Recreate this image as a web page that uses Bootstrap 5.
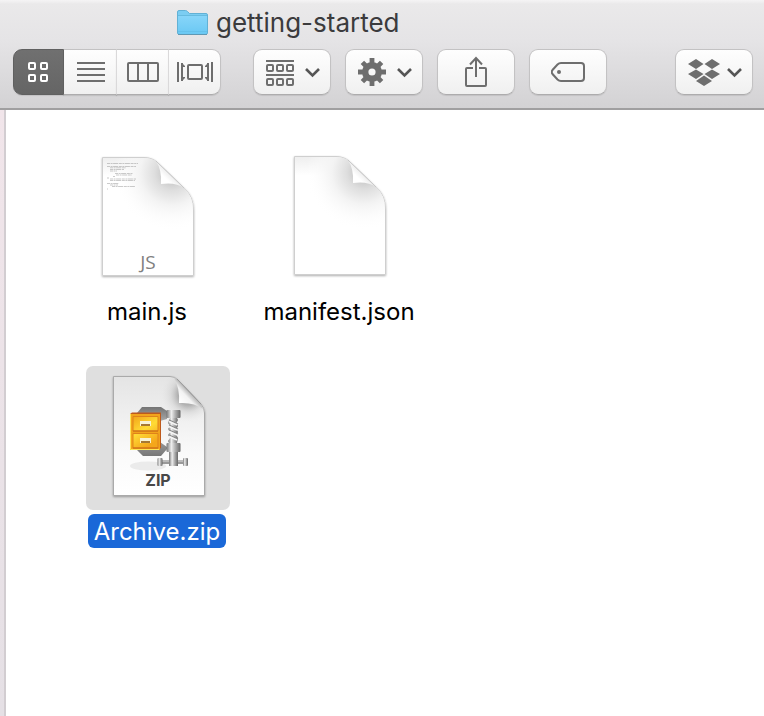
<!DOCTYPE html>
<html lang="en">
<head>
<meta charset="utf-8">
<meta name="viewport" content="width=device-width, initial-scale=1">
<title>getting-started</title>
<link href="https://cdn.jsdelivr.net/npm/bootstrap@5.3.0/dist/css/bootstrap.min.css" rel="stylesheet">
<style>
  body { font-family: Inter, "Liberation Sans", sans-serif; background: #fff; color: #000; }
  svg { display: block; }
  .window-bar { background: linear-gradient(#f5f4f5 0, #eae9ea 4px, #e5e4e6 40px, #d3d2d4 100%); border-bottom: 2px solid #a09fa0; padding: 6px 11px 13px 13px; }
  .window-title { font-size: 26px; line-height: 34px; color: #3b3b3d; }
  .title-row { padding-left: 164px; gap: 8px; margin-bottom: 9px; }
  .tool-row { gap: 14px; }
  .tool { --bs-btn-border-color: #c3c2c3; --bs-btn-hover-border-color: #c3c2c3; --bs-btn-padding-x: 0; --bs-btn-padding-y: 0;
    height: 46px; background: linear-gradient(#fefefe, #f0f0f0); color: #6e6e6e; border-bottom-color: #adacad; box-shadow: 0 1px 1px #00000018;
    display: flex; align-items: center; justify-content: center; }
  .tool-single { width: 78px; border-radius: 9px; }
  .tool-menu { padding-left: 2px; }
  .views { width: 208px; margin-right: 18px; }
  .views .tool { flex: 1 1 0; border-left-color: #dad9da; }
  .views .tool:first-child { border-top-left-radius: 9px; border-bottom-left-radius: 9px; }
  .views .tool:last-child { border-top-right-radius: 9px; border-bottom-right-radius: 9px; }
  .views .tool.active { background: linear-gradient(#707070, #656565); border-color: #606060; color: #fff; }
  .edge { width: 6px; background: linear-gradient(#f1e5ea, #e5e0e5); border-right: 2px solid #d2cdd1; }
  .files { padding: 36px 0 36px 46px; }
  .file-row { gap: 48px; padding-left: 24px; margin-bottom: 38px; }
  .file-row-offset { padding-left: 34px; }
  .file { width: 144px; color: #000; }
  .thumb { border-radius: 7px; }
  .file-name { font-size: 24px; line-height: 32px; padding: 2px 6px 0; margin: 4px 2px 0 0; border-radius: 6px; white-space: nowrap; }
  .selected .thumb { background: #dfdfdf; }
  .selected .file-name { background: #1a68d8; color: #fff; }
</style>
<script src="https://cdn.jsdelivr.net/npm/bootstrap@5.3.0/dist/js/bootstrap.bundle.min.js"></script>
</head>
<body class="d-flex flex-column min-vh-100">
<header class="window-bar">
  <div class="title-row d-flex align-items-center">
    <svg width="31" height="28" viewBox="0 0 31 28" aria-hidden="true">
      <defs><linearGradient id="folder" x2="0" y2="1"><stop stop-color="#87d5f9"/><stop offset="1" stop-color="#6ac8f3"/></linearGradient></defs>
      <path d="M.5 3Q.5 1.500 2 1.500H8.500Q9.500 1.500 10.500 2.500L12.500 4.500H29Q30.500 4.500 30.500 6V24.500H.5Z" fill="#7bcdf2" stroke="#62b1d5"/>
      <path d="M1 7H30V23.500Q30 25 28.500 25H2.500Q1 25 1 23.500Z" fill="url(#folder)"/>
      <path d="M1 6.500H30" stroke="#67bbdf"/><path d="M1 22.500H30" stroke="#62bee8" opacity=".7"/><path d="M1 25.500H30" stroke="#6098b3"/>
    </svg>
    <h1 class="window-title fw-normal mb-0">getting-started</h1>
  </div>
  <div class="tool-row d-flex align-items-center" role="toolbar" aria-label="Window tools">
    <div class="btn-group views" role="group" aria-label="View">
      <button type="button" class="btn tool active" aria-label="Icons" aria-pressed="true">
        <svg width="22" height="22" fill="none" stroke="currentColor" stroke-width="2"><rect x="1" y="2" width="6" height="6" rx="1"/><rect x="13" y="2" width="6" height="6" rx="1"/><rect x="1" y="14" width="6" height="6" rx="1"/><rect x="13" y="14" width="6" height="6" rx="1"/></svg>
      </button>
      <button type="button" class="btn tool tool-menu" aria-label="List">
        <svg width="28" height="20" stroke="currentColor" stroke-width="2"><path d="M0 1H28M0 7H28M0 13H28M0 19H28"/></svg>
      </button>
      <button type="button" class="btn tool tool-menu" aria-label="Columns">
        <svg width="32" height="20" fill="none" stroke="currentColor" stroke-width="2"><rect x="1" y="1" width="30" height="18" rx="1"/><path d="M11 1V19M21 1V19"/></svg>
      </button>
      <button type="button" class="btn tool tool-menu" aria-label="Cover flow">
        <svg width="36" height="20" fill="none" stroke="currentColor" stroke-width="2"><rect x="11" y="3" width="14" height="14" rx="1"/><path d="M1 0V20M35 0V20M5 1V19M31 1V19"/><path d="M5 1L8 4V5H5ZM5 19L8 16V15H5ZM31 1L28 4V5H31ZM31 19L28 16V15H31Z" fill="currentColor" stroke="none"/></svg>
      </button>
    </div>
    <button type="button" class="btn tool tool-single tool-menu" aria-label="Arrange items">
      <svg width="54" height="28" fill="none" stroke="currentColor" stroke-width="2"><path d="M0 3H28M0 17H28"/><rect x="1" y="7" width="6" height="6" rx="1"/><rect x="11" y="7" width="6" height="6" rx="1"/><rect x="21" y="7" width="6" height="6" rx="1"/><rect x="1" y="21" width="6" height="6" rx="1"/><rect x="11" y="21" width="6" height="6" rx="1"/><rect x="21" y="21" width="6" height="6" rx="1"/><path d="M40 11L46.500 17.500L53 11" stroke="#555" stroke-width="2.600"/></svg>
    </button>
    <button type="button" class="btn tool tool-single tool-menu" aria-label="Actions">
      <svg width="54" height="28"><g fill="none" stroke="currentColor" transform="translate(14 14)"><circle r="6.800" stroke-width="6.400"/><g stroke-width="4.800"><path d="M0-14V-8M0 14V8M-14 0H-8M14 0H8"/><path d="M-9.600-9.600L-6-6M9.600-9.600L6-6M-9.600 9.600L-6 6M9.600 9.600L6 6"/></g></g><path d="M40 11L46.500 17.500L53 11" fill="none" stroke="#555" stroke-width="2.600"/></svg>
    </button>
    <button type="button" class="btn tool tool-single" aria-label="Share">
      <svg width="22" height="32" viewBox="0 0 22 32" fill="none" stroke="currentColor" stroke-width="2"><path d="M8 12H2Q1 12 1 13V29Q1 30 2 30H20Q21 30 21 29V13Q21 12 20 12H14M11 21V2M5 8.500L11 2L17 8.500"/></svg>
    </button>
    <button type="button" class="btn tool tool-single" aria-label="Edit tags">
      <svg width="34" height="20" fill="none" stroke="currentColor" stroke-width="2"><path d="M10 1H30Q33 1 33 4V16Q33 19 30 19H10Q8 19 6.500 17.500L1.500 12Q0 10 1.500 8L6.500 2.500Q8 1 10 1Z"/><circle cx="8" cy="10" r="2" fill="currentColor" stroke="none"/></svg>
    </button>
    <button type="button" class="btn tool tool-single tool-menu ms-auto" aria-label="Dropbox">
      <svg width="54" height="28" fill="currentColor"><path d="M0 6L8 1L15.500 6L8 11ZM16.500 6L24 1L32 6L24 11ZM0 16L8 11.500L15.500 16L8 21ZM16.500 16L24 11.500L32 16L24 21ZM8 23L16 17.500L24 23L16 28Z"/><path d="M40 11L46.500 17.500L53 11" fill="none" stroke="#555" stroke-width="2.600"/></svg>
    </button>
  </div>
</header>
<main class="d-flex flex-grow-1">
  <div class="edge flex-shrink-0"></div>
  <div class="files flex-grow-1">
    <div class="file-row d-flex">
      <button type="button" class="file btn p-0 border-0 d-flex flex-column align-items-center">
        <span class="thumb">
          <svg width="144" height="144" viewBox="0 0 144 144" aria-hidden="true">
            <defs>
              <radialGradient id="shade" gradientUnits="userSpaceOnUse" cx="96" cy="26" r="58"><stop offset=".1" stop-color="#c4c4c4"/><stop offset=".3" stop-color="#dedede"/><stop offset=".55" stop-color="#f3f3f3"/><stop offset="1" stop-color="#fff" stop-opacity="0"/></radialGradient>
              <linearGradient id="top" x2="0" y2="1"><stop stop-color="#eee"/><stop offset=".16" stop-color="#fff"/></linearGradient>
              <linearGradient id="flap" x1="1" y1="0" x2="0" y2="1"><stop offset=".4" stop-color="#e2e2e2"/><stop offset=".65" stop-color="#fff"/></linearGradient>
              <filter id="drop" x="-10%" y="-10%" width="120%" height="120%"><feDropShadow dx="0" dy="1" stdDeviation="1" flood-opacity=".32"/></filter>
              <g id="sheet">
                <path d="M26.500 10.500H68Q76 10.500 81 15L108 41Q117.500 49 117.500 63V128.500H26.500Z" fill="url(#top)" stroke="#cfcfcf" filter="url(#drop)"/>
                <path d="M27 11H68Q76 11 81 15L108 41Q117 49 117 63V128H27Z" fill="url(#shade)"/>
                <path d="M80 14Q86 23 85 37Q100 35 108 41Z" fill="url(#flap)"/>
                <path d="M80 14L108 41" stroke="#c8c8c8"/>
              </g>
            </defs>
            <use href="#sheet" y="1"/>
            <g stroke="#8b8b8b" stroke-width=".6" stroke-dasharray="3 .6 2 .5 5 .7" opacity=".75"><path d="M31 17.500H62M31 20.500H60M34 21.800H50M34 23.500H48M34 25H41M39 27.500H57M40 29H56M37 30.500H39M31 32H33M34 33H60M34 34.500H59M31 37.500H43M34 39H42M36 40.500H59M31 43H32"/></g>
            <text x="72" y="123" text-anchor="middle" font-family="Open Sans, sans-serif" font-size="19" fill="#808080">JS</text>
          </svg>
        </span>
        <span class="file-name">main.js</span>
      </button>
      <button type="button" class="file btn p-0 border-0 d-flex flex-column align-items-center">
        <span class="thumb"><svg width="144" height="144" viewBox="0 0 144 144" aria-hidden="true"><use href="#sheet"/></svg></span>
        <span class="file-name">manifest.json</span>
      </button>
    </div>
    <div class="file-row file-row-offset d-flex">
      <button type="button" class="file selected btn p-0 border-0 d-flex flex-column align-items-center" aria-pressed="true">
        <span class="thumb">
          <svg width="144" height="144" viewBox="0 0 144 144" aria-hidden="true">
            <defs>
              <linearGradient id="paper" x2="0" y2="1"><stop stop-color="#e4e4e4"/><stop offset=".65" stop-color="#fafafa"/><stop offset="1" stop-color="#fff"/></linearGradient>
              <linearGradient id="curl" x1="1" y1="0" x2="0" y2="1"><stop offset=".4" stop-color="#999"/><stop offset=".58" stop-color="#f2f2f2"/><stop offset=".8" stop-color="#fff"/><stop offset="1" stop-color="#ccc"/></linearGradient>
              <radialGradient id="dark" gradientUnits="userSpaceOnUse" cx="102" cy="29" r="27"><stop stop-color="#777"/><stop offset=".4" stop-color="#999" stop-opacity=".65"/><stop offset=".65" stop-color="#bbb" stop-opacity=".3"/><stop offset="1" stop-color="#ddd" stop-opacity="0"/></radialGradient>
              <linearGradient id="steel"><stop stop-color="#777"/><stop offset=".35" stop-color="#eee"/><stop offset=".6" stop-color="#b5b5b5"/><stop offset="1" stop-color="#666"/></linearGradient>
              <linearGradient id="clamp" x2="0" y2="1"><stop stop-color="#747474"/><stop offset=".3" stop-color="#aaa"/><stop offset=".7" stop-color="#999"/><stop offset="1" stop-color="#777"/></linearGradient>
              <linearGradient id="gold" x2=".5" y2="1"><stop stop-color="#f2a519"/><stop offset=".5" stop-color="#ffdb35"/><stop offset="1" stop-color="#f4a61b"/></linearGradient>
            </defs>
            <path d="M27.500 10.500H84Q89 10.500 92 14L115 38Q118.500 42 118.500 47V129.500H27.500Z" fill="url(#paper)" stroke="#aaa" filter="url(#drop)"/>
            <path d="M28 11H84Q89 11 92 14L115 38Q118 42 118 47V70H28Z" fill="url(#dark)"/>
            <path d="M88 12Q94 22 93 37Q108 36 117 43Q116 39 113 36L92 14Q90 12 88 12Z" fill="url(#curl)"/>
            <path d="M91 13L115 38" stroke="#999" fill="none"/>
            <ellipse cx="62" cy="100" rx="18" ry="4.500" fill="#ebebeb"/>
            <path d="M51 47L56 41H75L81 45V53L74 55V76L81 81V83L75 90H57L51 84Z" fill="url(#clamp)"/>
            <path d="M44 48L46 46.500L75 46.500V82L72 84H44Z" fill="#bd591c"/>
            <path d="M44 48H74V84H44Z" fill="#f2a41c"/><path d="M44.500 48V83.500H73" fill="none" stroke="#ffe454"/>
            <path d="M47 50.500H72V65H47ZM47 67.500H72V82H47Z" fill="url(#gold)" stroke="#df821a"/>
            <path d="M47 65H72M47 82H72" stroke="#c96b18"/>
            <path d="M54 55H65V60H54ZM54 72H65V77H54Z" fill="#f8f2d4"/><path d="M55 58H64V60H55ZM55 75H64V77H55Z" fill="#a67834"/>
            <rect x="80.500" y="44" width="14" height="8" rx="1" fill="url(#steel)"/>
            <path d="M84 52H91L92 54L90.500 57L92 60L90.500 63L92 66L90.500 69L92 72L91 77H83L82 75L84 72L82 69L84 66L82 63L84 60L82 57Z" fill="url(#steel)"/>
            <path d="M83 54L92 58M83 59L92 63M83 64L92 68M83 69L92 73" stroke="#888" stroke-width="1.200"/>
            <path d="M83 55.500L91 59M83 60.500L91 64M83 65.500L91 69M83 70.500L91 74" stroke="#f5f5f5" stroke-width="1.500"/>
            <rect x="80.500" y="77" width="14" height="9" rx="1" fill="url(#steel)"/>
            <rect x="75" y="94" width="24" height="4" fill="#999"/><path d="M76 95H99" stroke="#ddd"/>
            <rect x="83" y="86" width="9" height="14" fill="url(#steel)"/>
            <rect x="71.500" y="92" width="5" height="8" rx="1" fill="url(#steel)"/><rect x="97" y="92" width="5" height="8" rx="1" fill="url(#steel)"/>
            <text x="72" y="120" text-anchor="middle" font-size="16" font-weight="700" fill="#484848">ZIP</text>
          </svg>
        </span>
        <span class="file-name">Archive.zip</span>
      </button>
    </div>
  </div>
</main>
</body>
</html>
